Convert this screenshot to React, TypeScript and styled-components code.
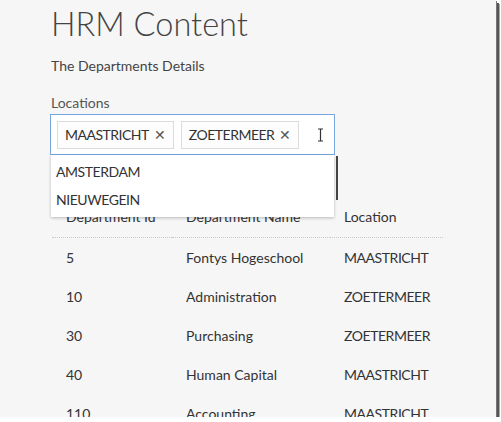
import React from "react";
import styled, { createGlobalStyle } from "styled-components";

const GlobalStyle = createGlobalStyle`
  html, body { margin: 0; padding: 0; background: #ffffff; }
  body { font-family: "Segoe UI", Lato, "Open Sans", sans-serif; color: #333; }
`;

const Frame = styled.div`
  position: relative;
  width: 496px;
  height: 417px;
  background: #f6f6f6;
  box-shadow: 1px 1px 0 #777, 3px 3px 0 #555, 4px 4px 0 #aaa;
  overflow: hidden;
  box-sizing: border-box;
  padding-left: 51px;
`;

const Title = styled.h1`
  margin: 0;
  padding-top: 4px;
  font-size: 32.5px;
  line-height: 40px;
  font-weight: 300;
  color: #444;
`;

const Subtitle = styled.p`
  margin: 13px 0 0;
  font-size: 14px;
  line-height: 18px;
  color: #444;
`;

const Label = styled.div`
  margin-top: 19px;
  font-size: 14px;
  line-height: 18px;
  color: #555;
`;

const Field = styled.div`
  position: relative;
  margin-top: 2px;
  margin-left: -1px;
  width: 285px;
`;

const InputBox = styled.div`
  box-sizing: border-box;
  height: 41px;
  border: 1px solid #7aa6e0;
  background: #fff;
  display: flex;
  align-items: center;
  gap: 7px;
  padding: 0 6px;
`;

const Chip = styled.span`
  box-sizing: border-box;
  flex-shrink: 0;
  height: 28px;
  display: inline-flex;
  align-items: center;
  gap: 5px;
  padding: 0 7px 0 7px;
  border: 1px solid #dcdcdc;
  background: #fdfdfd;
  font-size: 14px;
  letter-spacing: -0.5px;
  color: #333;
`;

const ChipX = styled.span`
  font-size: 14px;
  color: #555;
  line-height: 1;
  letter-spacing: 0;
`;

const Caret = styled.svg`
  flex-shrink: 0;
  margin-left: 11px;
`;

const Dropdown = styled.ul`
  position: absolute;
  left: 1px;
  top: 41px;
  width: 283px;
  margin: 0;
  padding: 3px 0 3px;
  list-style: none;
  background: #fff;
  box-shadow: 0 1px 3px rgba(0, 0, 0, 0.25);
  z-index: 2;
`;

const Option = styled.li`
  height: 28px;
  line-height: 28px;
  padding-left: 5px;
  font-size: 14px;
  letter-spacing: -0.45px;
  color: #333;
`;

const ScrollThumb = styled.div`
  position: absolute;
  right: -3px;
  top: 42px;
  width: 2px;
  height: 44px;
  background: #444;
  z-index: 3;
`;

const Table = styled.div`
  margin-top: 42px;
  margin-left: 1px;
  width: 391px;
  display: grid;
  grid-template-columns: 120px 158px 113px;
`;

const HeadCell = styled.div`
  height: 40px;
  line-height: 40px;
  padding-left: 14px;
  font-size: 14px;
  color: #333;
  border-bottom: 1px dotted #c8c8c8;
  white-space: nowrap;
`;

const Cell = styled.div<{ $caps?: boolean }>`
  height: 39px;
  line-height: 39px;
  padding-left: 14px;
  font-size: 14px;
  letter-spacing: ${(p) => (p.$caps ? "-0.45px" : "0")};
  color: #333;
  white-space: nowrap;
`;

const rows = [
  ["5", "Fontys Hogeschool", "MAASTRICHT"],
  ["10", "Administration", "ZOETERMEER"],
  ["30", "Purchasing", "ZOETERMEER"],
  ["40", "Human Capital", "MAASTRICHT"],
  ["110", "Accounting", "MAASTRICHT"],
];

export default function App() {
  return (
    <>
      <GlobalStyle />
      <Frame>
        <Title>HRM Content</Title>
        <Subtitle>The Departments Details</Subtitle>
        <Label>Locations</Label>
        <Field>
          <InputBox>
            <Chip>
              MAASTRICHT <ChipX>✕</ChipX>
            </Chip>
            <Chip>
              ZOETERMEER <ChipX>✕</ChipX>
            </Chip>
            <Caret width="7" height="14" viewBox="0 0 7 14">
              <path d="M1 1h5M1 13h5M3.5 1v12" stroke="#333" strokeWidth="1.2" fill="none" />
            </Caret>
          </InputBox>
          <Dropdown>
            <Option>AMSTERDAM</Option>
            <Option>NIEUWEGEIN</Option>
          </Dropdown>
          <ScrollThumb />
        </Field>
        <Table>
          <HeadCell>Department Id</HeadCell>
          <HeadCell>Department Name</HeadCell>
          <HeadCell>Location</HeadCell>
          {rows.map((r) =>
            r.map((c, i) => (
              <Cell key={r[0] + "-" + i} $caps={i === 2}>
                {c}
              </Cell>
            ))
          )}
        </Table>
      </Frame>
    </>
  );
}
